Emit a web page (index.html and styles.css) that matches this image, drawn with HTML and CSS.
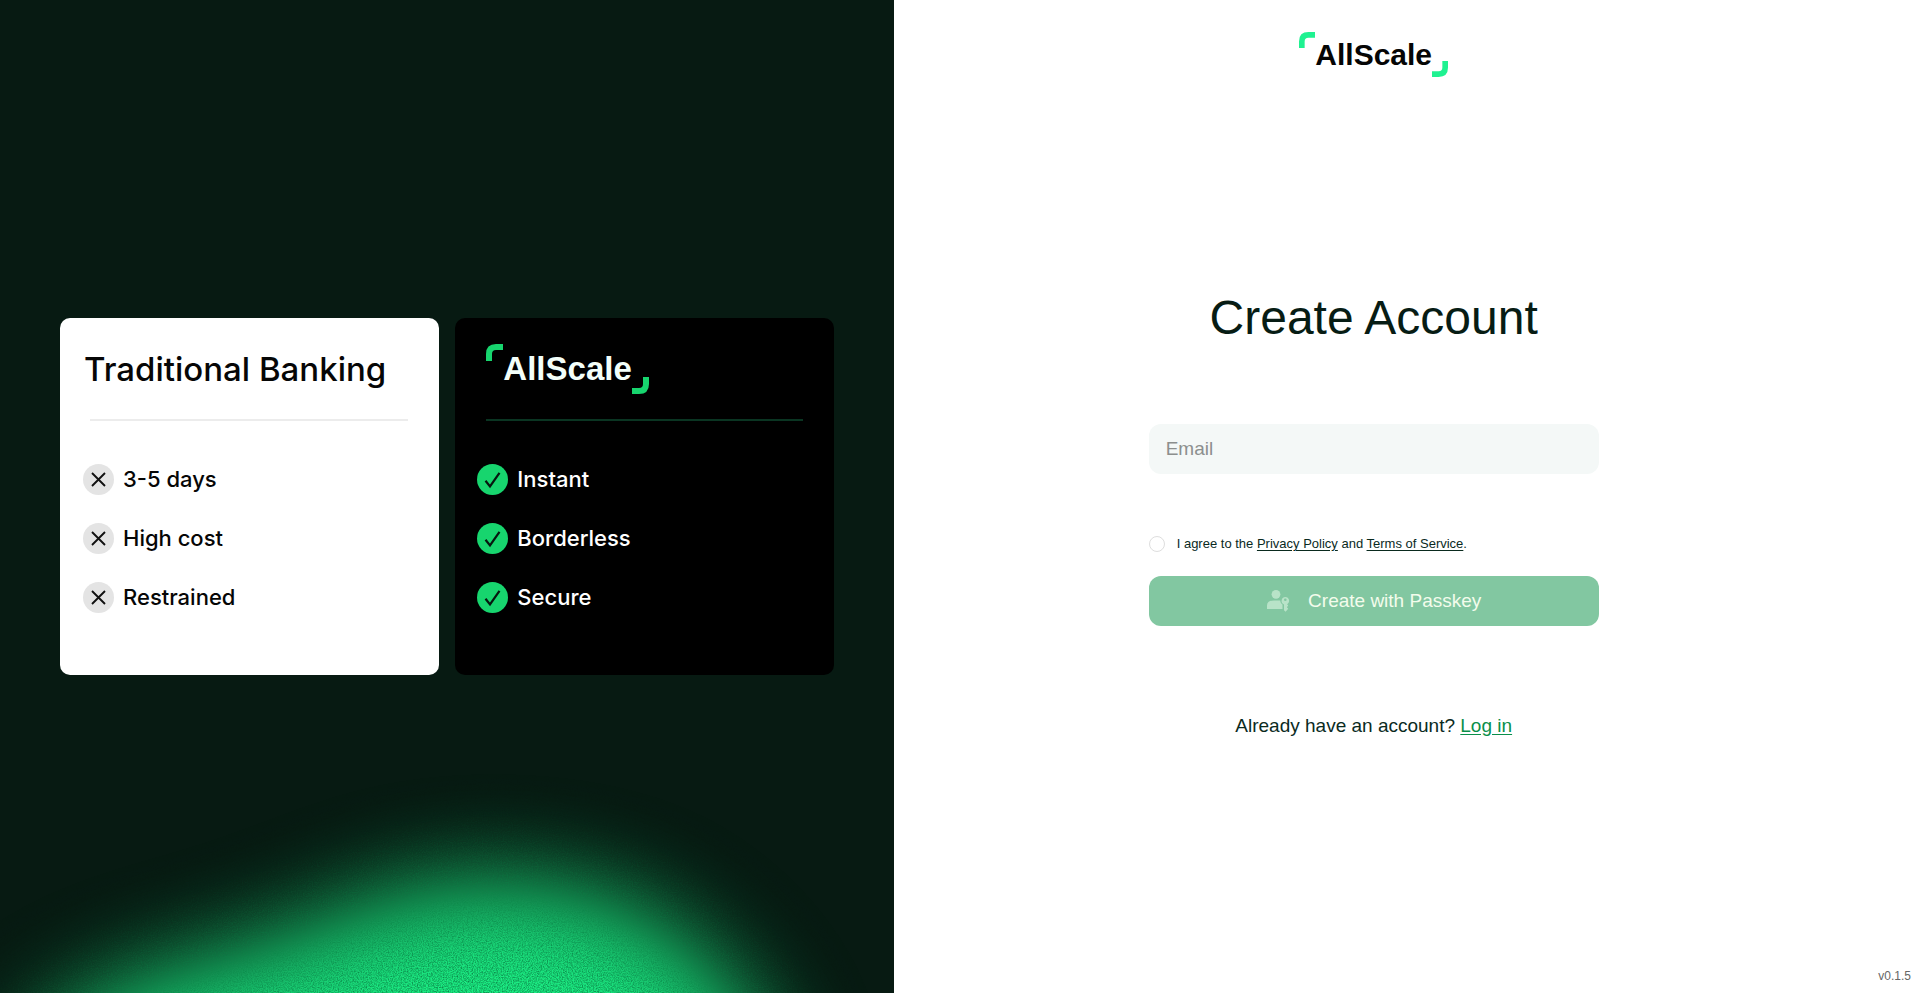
FILE: index.html
```html
<!DOCTYPE html>
<html lang="en">
<head>
<meta charset="utf-8">
<title>AllScale - Create Account</title>
<meta name="viewport" content="width=device-width, initial-scale=1">
<link rel="stylesheet" href="styles.css">
</head>
<body>
<div class="page">
  <aside class="promo">
    <svg class="glow" viewBox="0 0 894 993" preserveAspectRatio="xMidYMax slice" aria-hidden="true">
      <defs>
        <filter id="soft" filterUnits="userSpaceOnUse" x="-250" y="600" width="1400" height="900" color-interpolation-filters="sRGB">
          <feGaussianBlur stdDeviation="50" result="shape"/>
          <feTurbulence type="fractalNoise" baseFrequency="0.8" numOctaves="2" seed="4"/>
          <feColorMatrix values="0 0 0 0 0.04  0 0 0 0 0.52  0 0 0 0 0.28  2 0 0 0 -0.7" result="grain"/>
          <feComposite in="grain" in2="shape" operator="in" result="grainIn"/>
          <feMerge><feMergeNode in="shape"/><feMergeNode in="grainIn"/></feMerge>
        </filter>
      </defs>
      <path filter="url(#soft)" fill="#1df488" d="M40 1050C90 1005 150 985 210 970C300 948 360 912 430 897C500 885 590 893 650 930C705 966 735 1000 765 1060L800 1300H0Z"/>
    </svg>
    <section class="card card-light">
      <div class="card-head"><h2 class="card-title">Traditional Banking</h2></div>
      <hr class="rule">
      <ul class="points">
        <li class="point"><svg class="mark" viewBox="0 0 31 31" aria-hidden="true"><circle cx="15.500" cy="15.500" r="15.500" fill="#e4e4e4"/><path d="M9 9L22 22M22 9L9 22" stroke="#111" stroke-width="1.900"/></svg>3-5 days</li>
        <li class="point"><svg class="mark" viewBox="0 0 31 31" aria-hidden="true"><circle cx="15.500" cy="15.500" r="15.500" fill="#e4e4e4"/><path d="M9 9L22 22M22 9L9 22" stroke="#111" stroke-width="1.900"/></svg>High cost</li>
        <li class="point"><svg class="mark" viewBox="0 0 31 31" aria-hidden="true"><circle cx="15.500" cy="15.500" r="15.500" fill="#e4e4e4"/><path d="M9 9L22 22M22 9L9 22" stroke="#111" stroke-width="1.900"/></svg>Restrained</li>
      </ul>
    </section>
    <section class="card card-dark">
      <div class="card-head">
        <div class="logo logo-large">
          <svg class="corner" viewBox="0 0 17 17" aria-hidden="true"><path d="M3 17V10Q3 3 10 3H17" fill="none" stroke="currentColor" stroke-width="6"/></svg>
          <span class="logo-name">AllScale</span>
          <svg class="corner corner-end" viewBox="0 0 17 17" aria-hidden="true"><path d="M0 14H7Q14 14 14 7V0" fill="none" stroke="currentColor" stroke-width="6"/></svg>
        </div>
      </div>
      <hr class="rule">
      <ul class="points">
        <li class="point"><svg class="mark" viewBox="0 0 31 31" aria-hidden="true"><circle cx="15.500" cy="15.500" r="15.500" fill="#17d56e"/><path d="M8.500 16.800L13 22.500L22.500 8.800" fill="none" stroke="#06170f" stroke-width="2.200"/></svg>Instant</li>
        <li class="point"><svg class="mark" viewBox="0 0 31 31" aria-hidden="true"><circle cx="15.500" cy="15.500" r="15.500" fill="#17d56e"/><path d="M8.500 16.800L13 22.500L22.500 8.800" fill="none" stroke="#06170f" stroke-width="2.200"/></svg>Borderless</li>
        <li class="point"><svg class="mark" viewBox="0 0 31 31" aria-hidden="true"><circle cx="15.500" cy="15.500" r="15.500" fill="#17d56e"/><path d="M8.500 16.800L13 22.500L22.500 8.800" fill="none" stroke="#06170f" stroke-width="2.200"/></svg>Secure</li>
      </ul>
    </section>
  </aside>

  <div class="signup">
    <header class="top">
      <div class="logo">
        <svg class="corner" viewBox="0 0 17 17" aria-hidden="true"><path d="M3 17V10Q3 3 10 3H17" fill="none" stroke="currentColor" stroke-width="6"/></svg>
        <span class="logo-name">AllScale</span>
        <svg class="corner corner-end" viewBox="0 0 17 17" aria-hidden="true"><path d="M0 14H7Q14 14 14 7V0" fill="none" stroke="currentColor" stroke-width="6"/></svg>
      </div>
    </header>
    <main class="main">
      <h1 class="title">Create Account</h1>
      <form class="form">
        <input class="email" type="email" placeholder="Email" aria-label="Email">
        <div class="agree">
          <input class="tick" type="checkbox" id="agree">
          <label for="agree">I agree to the <a class="legal" href="#privacy">Privacy Policy</a> and <a class="legal" href="#terms">Terms of Service</a>.</label>
        </div>
        <button class="submit" type="submit" disabled>
          <svg class="passkey" viewBox="0 0 24 24" aria-hidden="true"><circle cx="10" cy="5.300" r="4.400"/><path d="M1 20V16.500C1 13 4 11.400 8 11.400H14.200C14.400 13.200 15.200 14.600 16.500 15.600V20Z"/><path fill-rule="evenodd" d="M19.300 7.900A3.900 3.900 0 0 1 21.100 15.200L22.200 16.600L20.900 18.200L22.200 19.800L19.600 22.800L18 21.200V15.400A3.900 3.900 0 0 1 19.300 7.900ZM19.300 9.500A1.300 1.300 0 1 0 19.300 12.100A1.300 1.300 0 1 0 19.300 9.500Z"/></svg>
          <span>Create with Passkey</span>
        </button>
      </form>
      <p class="login">Already have an account? <a class="login-link" href="#login">Log in</a></p>
    </main>
    <footer class="version">v0.1.5</footer>
  </div>
</div>
</body>
</html>
```
FILE: styles.css
```css
*, *::before, *::after { box-sizing: border-box; }

body {
  margin: 0;
  background: #fff;
  color: #071c14;
  font-family: "Liberation Sans", Arial, sans-serif;
}

h1, h2, p, ul { margin: 0; padding: 0; }

.page {
  display: flex;
  min-height: 100vh;
}

/* Promo panel */
.promo {
  position: relative;
  display: flex;
  flex: none;
  align-items: center;
  gap: 16px;
  aspect-ratio: 9 / 10;
  height: 100vh;
  padding: 0 60px;
  overflow: hidden;
  background: #071a12;
  font-family: Inter, sans-serif;
}

.glow {
  position: absolute;
  inset: 0;
  width: 100%;
  height: 100%;
}

.card {
  position: relative;
  flex: 1;
  padding: 26px 23px 62px;
  border-radius: 10px;
}

.card-light { background: #fff; color: #060606; }

.card-dark {
  padding-left: 22px;
  background: #000;
  color: #fff;
}

.card-head {
  display: flex;
  align-items: center;
  height: 50px;
}

.card-title {
  padding-left: 1px;
  font-size: 33px;
  font-weight: 500;
  line-height: 40px;
  white-space: nowrap;
}

.rule {
  height: 2px;
  margin: 25px 8px 43px 7px;
  border: 0;
  background: #ececec;
}

.card-dark .rule { margin-left: 9px; background: #0a3522; }

.card-dark .card-head { padding-left: 9px; }

.points {
  display: grid;
  gap: 28px;
  list-style: none;
}

.point {
  display: flex;
  align-items: center;
  gap: 9px;
  font-size: 22px;
  font-weight: 500;
  line-height: 31px;
}

.mark { width: 31px; height: 31px; }

/* Logo */
.logo {
  display: inline-flex;
  height: 45px;
  color: #1ff291;
  font-family: "Liberation Sans", Arial, sans-serif;
}

.logo-name {
  align-self: center;
  color: #050505;
  font-size: 30px;
  font-weight: 700;
  line-height: 45px;
}

.corner { width: 16px; height: 16px; }
.corner-end { align-self: flex-end; }

.logo-large { height: 50px; color: #17d56e; }
.logo-large .logo-name { color: #f3fffa; font-size: 33px; line-height: 50px; }
.logo-large .corner { width: 17px; height: 17px; }

/* Sign-up panel */
.signup {
  display: flex;
  flex: 1;
  flex-direction: column;
  min-width: 0;
}

.top,
.main {
  width: 50vw;
  max-width: 100%;
}

.top {
  display: flex;
  justify-content: center;
  padding-top: 32px;
}

.main {
  display: flex;
  flex: 1;
  flex-direction: column;
  align-items: center;
  justify-content: center;
  padding: 0 24px;
}

.title {
  font-size: 48px;
  font-weight: 400;
  line-height: 56px;
}

.form {
  width: 100%;
  max-width: 450px;
  margin: 78px 0 88px;
}

.email {
  display: block;
  width: 100%;
  height: 50px;
  padding: 0 17px;
  border: 0;
  border-radius: 12px;
  background: #f4f8f7;
  color: #071c14;
  font: 19px "Liberation Sans", Arial, sans-serif;
}

.email::placeholder { color: #8c8f8e; opacity: 1; }

.agree {
  display: flex;
  align-items: center;
  gap: 12px;
  margin: 62px 0 24px;
  color: #0a2a1e;
  font-size: 13px;
  line-height: 16px;
}

.tick {
  appearance: none;
  flex: none;
  width: 16px;
  height: 16px;
  margin: 0;
  border: 1px solid #dedede;
  border-radius: 50%;
  background: #fff;
}

.tick:checked { background: #0a8f4b; }

.legal { color: inherit; text-underline-offset: 2px; }

.submit {
  display: flex;
  align-items: center;
  justify-content: center;
  gap: 18px;
  width: 100%;
  height: 50px;
  border: 0;
  border-radius: 12px;
  background: #82c7a1;
  color: #f3fcec;
  font: 19px "Liberation Sans", Arial, sans-serif;
}

.passkey { width: 24px; height: 24px; fill: #b8e3c8; }

.login {
  color: #0a2a1e;
  font-size: 19px;
  line-height: 24px;
}

.login-link { color: #0a8f4b; text-underline-offset: 2px; }

.version {
  padding: 17px 9px 9px;
  color: #666;
  font-size: 12px;
  line-height: 16px;
  text-align: right;
}
```
